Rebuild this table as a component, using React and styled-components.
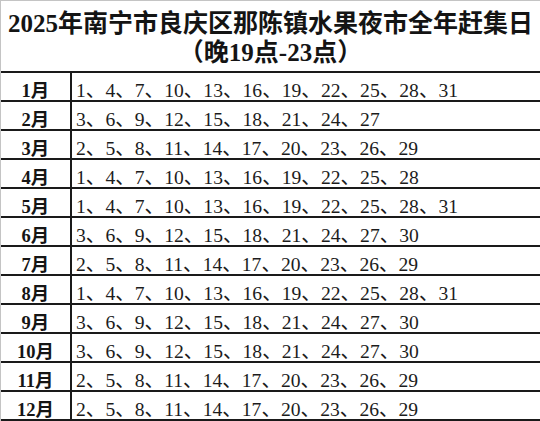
import React from "react";
import styled, { createGlobalStyle } from "styled-components";

const Global = createGlobalStyle`
  html, body { margin: 0; padding: 0; background: #fff; }
  body { font-family: "Liberation Serif", "Noto Sans CJK SC", serif; color: #111; }
`;

const Page = styled.div`
  width: 540px;
  height: 421px;
  box-sizing: border-box;
  border-top: 1px solid #c4c4c4;
  border-left: 1px solid #c4c4c4;
  overflow: hidden;
  background: #fff;
`;

const Title = styled.header`
  padding: 8px 0 4px;
  height: 70px;
  box-sizing: border-box;
  text-align: center;
  font-size: 25px;
  font-weight: 700;
  line-height: 29px;
  color: #141414;
  white-space: nowrap;
`;

const TitleLine = styled.div``;

const Table = styled.div`
  border-top: 2px solid #1a1a1a;
`;

const Row = styled.div`
  display: grid;
  grid-template-columns: 71px 1fr;
  height: 29px;
  box-sizing: border-box;
  border-bottom: 2px solid #1a1a1a;
`;

const Month = styled.div`
  display: flex;
  align-items: center;
  justify-content: center;
  border-right: 2px solid #1a1a1a;
  font-size: 18.5px;
  font-weight: 700;
  color: #151515;
  padding-top: 1px;
`;

const Dates = styled.div`
  display: flex;
  align-items: center;
  padding-left: 4px;
  padding-top: 1px;
  font-size: 19.6px;
  font-weight: 400;
  color: #1c1c1c;
  white-space: nowrap;
`;

const data = [
  ["1月", [1, 4, 7, 10, 13, 16, 19, 22, 25, 28, 31]],
  ["2月", [3, 6, 9, 12, 15, 18, 21, 24, 27]],
  ["3月", [2, 5, 8, 11, 14, 17, 20, 23, 26, 29]],
  ["4月", [1, 4, 7, 10, 13, 16, 19, 22, 25, 28]],
  ["5月", [1, 4, 7, 10, 13, 16, 19, 22, 25, 28, 31]],
  ["6月", [3, 6, 9, 12, 15, 18, 21, 24, 27, 30]],
  ["7月", [2, 5, 8, 11, 14, 17, 20, 23, 26, 29]],
  ["8月", [1, 4, 7, 10, 13, 16, 19, 22, 25, 28, 31]],
  ["9月", [3, 6, 9, 12, 15, 18, 21, 24, 27, 30]],
  ["10月", [3, 6, 9, 12, 15, 18, 21, 24, 27, 30]],
  ["11月", [2, 5, 8, 11, 14, 17, 20, 23, 26, 29]],
  ["12月", [2, 5, 8, 11, 14, 17, 20, 23, 26, 29]],
];

export default function App() {
  return (
    <>
      <Global />
      <Page>
        <Title>
          <TitleLine>2025年南宁市良庆区那陈镇水果夜市全年赶集日</TitleLine>
          <TitleLine>（晚19点-23点）</TitleLine>
        </Title>
        <Table>
          {data.map(([m, days]) => (
            <Row key={m}>
              <Month>{m}</Month>
              <Dates>{days.join("、")}</Dates>
            </Row>
          ))}
        </Table>
      </Page>
    </>
  );
}
